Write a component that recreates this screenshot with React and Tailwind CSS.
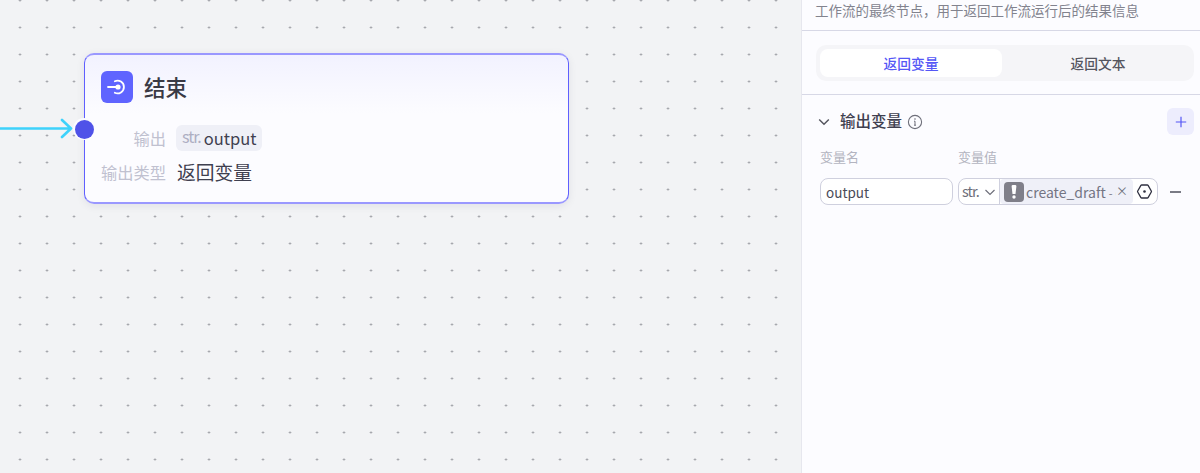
const FONT = `font-['Noto_Sans_CJK_SC','Noto_Sans',sans-serif]`;

function EndIcon() {
  return (
    <div className="w-8 h-8 rounded-md bg-[#5f64ff] flex items-center justify-center">
      <svg width="22" height="22" viewBox="0 0 22 22" fill="none">
        <path d="M8.8 5.2a6.4 6.4 0 1 1 0 11.6" stroke="#fff" strokeWidth="1.8" strokeLinecap="round" />
        <circle cx="12" cy="11" r="2.6" fill="#fff" />
        <path d="M2 11h9" stroke="#fff" strokeWidth="1.8" strokeLinecap="round" />
      </svg>
    </div>
  );
}

function Node() {
  return (
    <div className="absolute left-[84px] top-[53px] w-[485px] h-[151px] rounded-[10px] border border-[#5f5fff] border-y-2 border-y-[#9a98ff] shadow-[0_2px_8px_rgba(30,30,60,0.08)] bg-[linear-gradient(180deg,#f2f2ff_0%,#fcfcff_40%,#fcfcff_100%)]">
      <div className="flex items-center gap-[11px] pl-4 pt-[16px]">
        <EndIcon />
        <span className="text-[21.5px] leading-8 font-medium text-[#3a3a45]">结束</span>
      </div>
      <div className="flex items-center mt-[22px] pl-[15px] h-[26px]">
        <span className="w-[66px] text-right text-[16.25px] text-[#c0c1d0]">输出</span>
        <span className="ml-[10px] h-[26px] pl-1.5 pr-[5px] rounded-md bg-[#eff0f7] flex items-center">
          <span className="text-[16px] leading-none text-[#adaec2] tracking-[-1px] -mt-1">str.</span>
          <span className="ml-[3px] text-[16.5px] text-[#3f4050]">output</span>
        </span>
      </div>
      <div className="flex items-center mt-[8px] pl-[15px] h-[26px]">
        <span className="w-[66px] text-right text-[16.25px] whitespace-nowrap text-[#c0c1d0]">输出类型</span>
        <span className="ml-[11px] text-[18.75px] text-[#3f4050]">返回变量</span>
      </div>
      <div className="absolute left-[-12px] top-[63px] w-[22px] h-[22px] rounded-full bg-[#fbfbff] flex items-center justify-center">
        <div className="w-[19px] h-[19px] rounded-full bg-[#4f52e8]" />
      </div>
    </div>
  );
}

function Canvas() {
  return (
    <div className="relative flex-1 h-full overflow-hidden bg-[#f2f3f5] bg-[radial-gradient(circle,#8d8f96_0.8px,transparent_1.2px)] bg-[size:27px_27px] bg-[position:6.5px_-13px]">
      <svg className="absolute left-0 top-[115px]" width="80" height="28" viewBox="0 0 80 28" fill="none">
        <path d="M0 13.5H71M62 5l9 8.5-9 8.5" stroke="#3ed2fb" strokeWidth="2.6" strokeLinecap="round" strokeLinejoin="round" />
      </svg>
      <Node />
    </div>
  );
}

function Tabs() {
  return (
    <div className="h-[64px] pl-[14px] flex items-center border-b border-[#d7d8e6]">
      <div className="w-[378px] h-9 p-1 flex rounded-[10px] bg-[#f5f5f8]">
        <div className="w-[182px] pt-px rounded-lg bg-white flex items-center justify-center text-[13.75px] font-medium text-[#5557f6]">返回变量</div>
        <div className="flex-1 -mr-1 pt-px flex items-center justify-center text-[13.75px] font-medium text-[#55565f]">返回文本</div>
      </div>
    </div>
  );
}

function VariableRow() {
  return (
    <div className="flex items-center mt-[11px] pl-[18px]">
      <div className="w-[133px] h-[27px] pl-[5px] pt-px rounded-lg border border-[#cfd0de] bg-white flex items-center text-[13.5px] text-[#4a4b57]">output</div>
      <div className="ml-[5px] w-[200px] h-[27px] rounded-lg border border-[#cfd0de] bg-white flex items-center">
        <div className="w-[41px] h-full shrink-0 pl-[3px] flex items-center gap-[5px] border-r border-[#cfd0de]">
          <span className="text-[14.5px] leading-none text-[#6e6f7a] tracking-[-1px]">str.</span>
          <svg width="12" height="12" viewBox="0 0 12 12" fill="none"><path d="M1.5 4l4.5 4.5L10.5 4" stroke="#6e6f7a" strokeWidth="1.2" /></svg>
        </div>
        <div className="relative w-[133px] h-[25px] shrink-0 rounded bg-[#eff0f8] pl-1 flex items-center">
          <span className="w-5 h-5 shrink-0 rounded bg-[#7f7f89] flex items-center justify-center">
            <svg width="6" height="14" viewBox="0 0 6 14" fill="#fff"><path d="M.6 1.3a1.3 1.3 0 0 1 1.3-1.3h2.2a1.3 1.3 0 0 1 1.3 1.3L4.5 9h-3zM3 10.3a1.7 1.7 0 1 1 0 3.4 1.7 1.7 0 0 1 0-3.4z" /></svg>
          </span>
          <span className="ml-[2px] pt-px w-[90px] overflow-hidden whitespace-nowrap text-[14px] text-[#747583]">
            create_draft<span className="mx-[3px] text-[11px]">-</span>output
          </span>
          <span className="absolute right-[5px] top-px text-[12px] leading-[22px] text-[#6e6f7a]">×</span>
        </div>
        <svg className="ml-[3px]" width="17" height="17" viewBox="0 0 17 17" fill="none">
          <path d="M4.9 2.4a1 1 0 0 1 .8-.4h5.6a1 1 0 0 1 .8.4l3.2 5.6a1 1 0 0 1 0 1l-3.2 5.6a1 1 0 0 1-.8.4H5.700a1 1 0 0 1-.8-.4L1.700 9a1 1 0 0 1 0-1z" stroke="#2f3040" strokeWidth="1.3" />
          <circle cx="8.500" cy="8.500" r="1.300" fill="#2f3040" />
        </svg>
      </div>
      <span className="ml-[12px] mt-px w-[11px] h-[2px] bg-[#7a7b85]" />
    </div>
  );
}

function Panel() {
  return (
    <div className="w-[399px] h-full shrink-0 border-l border-[#e6e7ee] bg-[#fcfcff]">
      <div className="h-[31px] pl-[13px] border-b border-[#d7d8e6] flex items-start">
        <span className="text-[13.5px] leading-[21px] text-[#82838e] whitespace-nowrap">工作流的最终节点，用于返回工作流运行后的结果信息</span>
      </div>
      <Tabs />
      <div className="flex items-center h-[27px] mt-[13px] pl-[16px] pr-[6px]">
        <svg width="12" height="12" viewBox="0 0 12 12" fill="none"><path d="M1.2 3.5L6 8.2l4.8-4.7" stroke="#55565f" strokeWidth="1.5" /></svg>
        <span className="ml-[10px] text-[15.5px] font-medium text-[#3f4050] -mt-0.5">输出变量</span>
        <svg className="ml-[5px]" width="16" height="16" viewBox="0 0 16 16" fill="none">
          <circle cx="8" cy="8" r="6.6" stroke="#6e6f7a" strokeWidth="1.1" />
          <path d="M8 7.2v4M7 7.2h1M7 11.2h2" stroke="#6e6f7a" strokeWidth="1" />
          <circle cx="8" cy="5" r="0.8" fill="#6e6f7a" />
        </svg>
        <div className="ml-auto w-[27px] h-[27px] rounded-md bg-[#ededfd] flex items-center justify-center">
          <svg width="12" height="12" viewBox="0 0 12 12" fill="none"><path d="M6 .8v10.4M.8 6h10.4" stroke="#5557f6" strokeWidth="1.2" /></svg>
        </div>
      </div>
      <div className="flex items-center mt-[12px] pl-[18px] text-[13px] leading-5 text-[#b3b4c0]">
        <span className="w-[138px]">变量名</span>
        <span>变量值</span>
      </div>
      <VariableRow />
    </div>
  );
}

export default function App() {
  return (
    <div className={`flex w-[1200px] h-[473px] overflow-hidden ${FONT}`}>
      <Canvas />
      <Panel />
    </div>
  );
}
